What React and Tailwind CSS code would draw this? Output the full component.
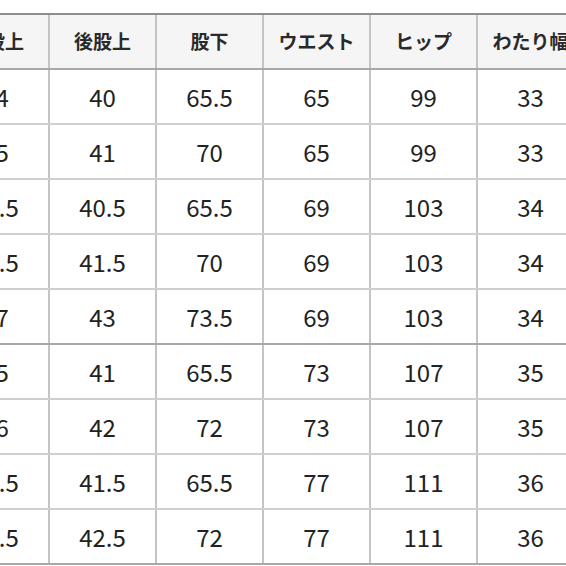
const HEADERS = ["前股上", "後股上", "股下", "ウエスト", "ヒップ", "わたり幅", "裾幅"];

const ROWS = [
  ["34", "40", "65.5", "65", "99", "33", "21"],
  ["35", "41", "70", "65", "99", "33", "21"],
  ["35.5", "40.5", "65.5", "69", "103", "34", "22"],
  ["36.5", "41.5", "70", "69", "103", "34", "22"],
  ["37", "43", "73.5", "69", "103", "34", "22"],
  ["35", "41", "65.5", "73", "107", "35", "23"],
  ["36", "42", "72", "73", "107", "35", "23"],
  ["36.5", "41.5", "65.5", "77", "111", "36", "24"],
  ["37.5", "42.5", "72", "77", "111", "36", "24"],
];

const FONT = { fontFamily: '"Noto Sans CJK JP", "Noto Sans", sans-serif' };

function Row({ cells, header, dark }) {
  return (
    <div
      className={`flex h-[55px] border-b-2 ${dark ? "border-[#a8a8a8]" : "border-[#cfcfcf]"} ${
        header ? "bg-[#f5f5f5]" : "bg-white"
      }`}
    >
      {cells.map((c, i) => (
        <div
          key={i}
          className={`flex w-[107px] shrink-0 items-center justify-center border-r-2 border-[#c4c4c4] ${
            header ? "text-[19px] font-semibold text-[#2a2a2a]" : "text-[24px] text-[#222]"
          }`}
        >
          {c}
        </div>
      ))}
    </div>
  );
}

export default function App() {
  return (
    <div className="h-[566px] w-[566px] overflow-hidden bg-white pt-[13px]" style={FONT}>
      <div className="ml-[-57px] w-[749px] border-t-2 border-[#8e8e8e]">
        <Row cells={HEADERS} header dark />
        {ROWS.map((r, i) => (
          <Row key={i} cells={r} dark={i === 4 || i === 8} />
        ))}
      </div>
    </div>
  );
}
